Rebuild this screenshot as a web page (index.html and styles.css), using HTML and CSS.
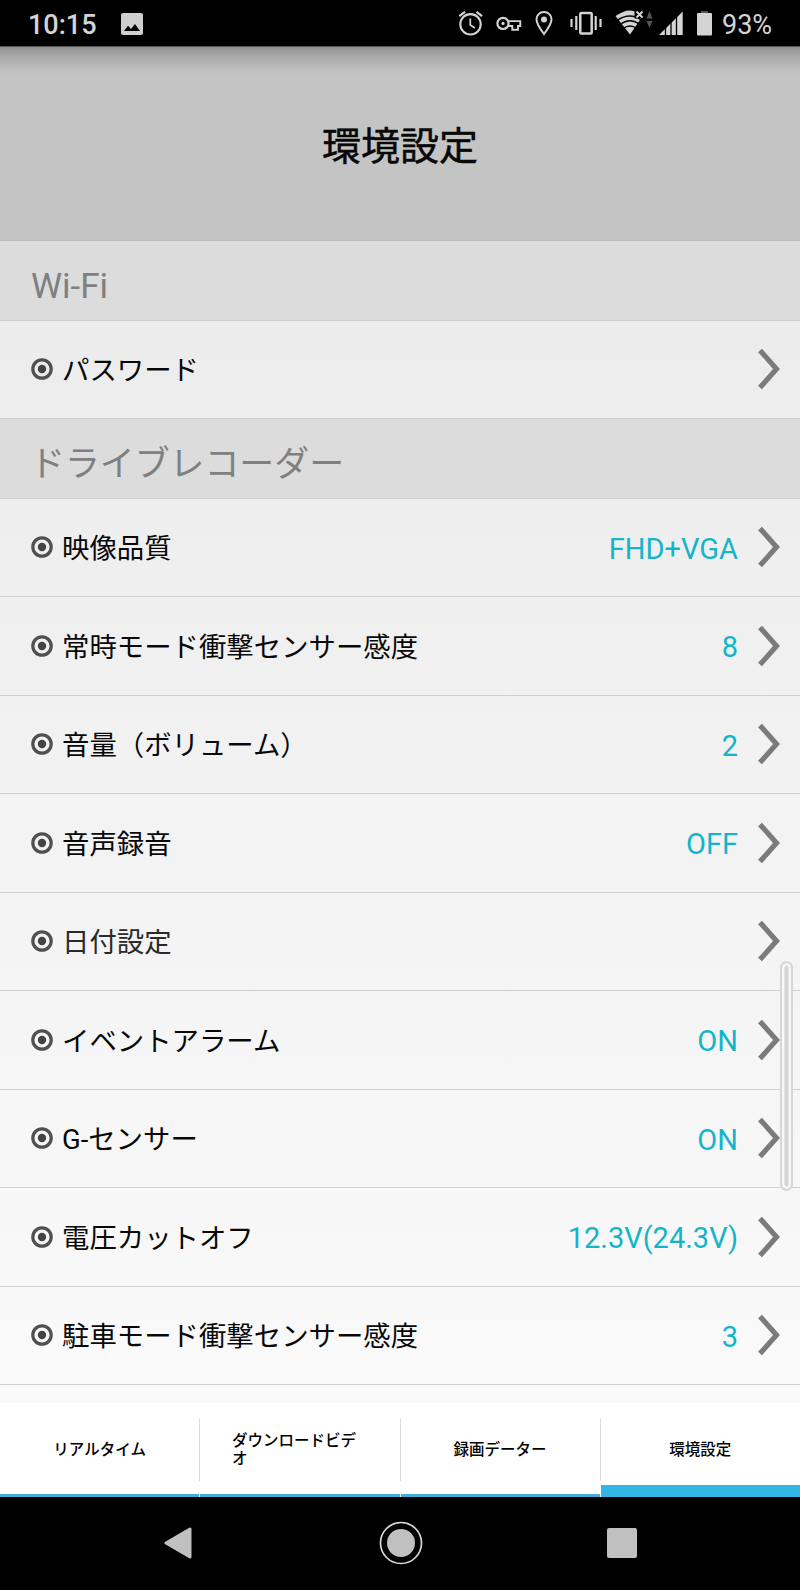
FILE: index.html
```
<!DOCTYPE html>
<html lang="ja">
<head>
<meta charset="utf-8">
<title>環境設定</title>
<link rel="stylesheet" href="styles.css">
</head>
<body>
<svg class="defs" width="0" height="0">
  <symbol id="dot" viewBox="0 0 22 22"><circle cx="11" cy="11" r="9.2" fill="none" stroke="#505050" stroke-width="3.2"/><circle cx="11" cy="11" r="4.2" fill="#444"/></symbol>
  <symbol id="chevron" viewBox="0 0 22 42"><path d="M2 2.4 18.5 21 2 39.6" fill="none" stroke="#7b7b7b" stroke-width="5.2"/></symbol>
</svg>
<div class="screen">
  <div class="statusbar">
    <span class="clock">10:15</span>
    <svg class="photo" width="22" height="22" viewBox="0 0 22 22"><rect width="22" height="22" rx="2" fill="#cfcfcf"/><path d="M3 18 7 12.8 10 16 14 11 19 18z" fill="#000"/></svg>
    <svg class="icons" width="240" height="46" viewBox="0 0 240 46" fill="none" stroke="#d4d4d4">
      <circle cx="20.5" cy="24.3" r="10.2" stroke-width="2.1"/><path d="M20.3 18.5V25l4.6 3" stroke-width="1.7"/><path d="M9.3 16.2 15 11.8M26.500 11.800 32 16.200" stroke-width="2.2"/>
      <circle cx="53" cy="23.400" r="5.600" stroke-width="2.200"/><circle cx="53" cy="23.400" r="1.600" fill="#d4d4d4" stroke="none"/><path d="M58 21.100H70.300V26H68V29.700H62.300V26H58" stroke-width="1.900"/>
      <path d="M94 12c-4.300 0-7.500 3.200-7.500 7.300 0 5 7.500 14.700 7.500 14.700s7.500-9.700 7.500-14.700C101.500 15.200 98.300 12 94 12z" stroke-width="2"/><circle cx="94" cy="19.600" r="3" fill="#d4d4d4" stroke="none"/>
      <rect x="130.300" y="13" width="11.400" height="20.500" rx="1" stroke-width="2.500"/><path d="M126.300 16V30M145.700 16V30M121.500 19V27M150.500 19V27" stroke-width="2.200"/>
      <g stroke="none" fill="#d4d4d4"><path d="M165.500 16Q177 8 184.500 11.500V18.500H191L180 34.500z"/><path d="M214.500 35H209L232.700 11.500V35z"/></g>
      <g stroke="#000" stroke-width="1.300"><path d="M167 20.500Q180 11.500 192 20.500M170 24.500Q180 17 190 24.500M173 28.500Q180 23.500 187 28.500"/><path d="M215.500 12V35M221 12V35M226.500 12V35"/></g>
      <path d="M186.500 11.500 192.500 17.500M192.500 11.500 186.500 17.500" stroke-width="2"/>
      <path d="M196.500 18.500 199.500 11 202.500 18.500zM196.500 21 199.500 28 202.500 21z" fill="#555" stroke="none"/>
    </svg>
    <svg class="battery" width="15" height="26" viewBox="0 0 15 26"><path d="M4 1h7v2H4z" fill="#555"/><rect y="3" width="15" height="22.500" rx="1" fill="#d4d4d4"/></svg>
    <span class="percent">93%</span>
  </div>
  <header class="header"><h1 class="title">環境設定</h1></header>
  <main class="settings">
    <h2 class="section section-wifi">Wi-Fi</h2>
    <div class="row"><svg class="dot"><use href="#dot"/></svg><span class="label">パスワード</span><svg class="chevron"><use href="#chevron"/></svg></div>
    <h2 class="section section-recorder">ドライブレコーダー</h2>
    <div class="row"><svg class="dot"><use href="#dot"/></svg><span class="label">映像品質</span><span class="value">FHD+VGA</span><svg class="chevron"><use href="#chevron"/></svg></div>
    <div class="row"><svg class="dot"><use href="#dot"/></svg><span class="label">常時モード衝撃センサー感度</span><span class="value">8</span><svg class="chevron"><use href="#chevron"/></svg></div>
    <div class="row"><svg class="dot"><use href="#dot"/></svg><span class="label">音量（ボリューム）</span><span class="value">2</span><svg class="chevron"><use href="#chevron"/></svg></div>
    <div class="row"><svg class="dot"><use href="#dot"/></svg><span class="label">音声録音</span><span class="value">OFF</span><svg class="chevron"><use href="#chevron"/></svg></div>
    <div class="row"><svg class="dot"><use href="#dot"/></svg><span class="label label-muted">日付設定</span><svg class="chevron"><use href="#chevron"/></svg></div>
    <div class="row"><svg class="dot"><use href="#dot"/></svg><span class="label">イベントアラーム</span><span class="value">ON</span><svg class="chevron"><use href="#chevron"/></svg></div>
    <div class="row"><svg class="dot"><use href="#dot"/></svg><span class="label">G-センサー</span><span class="value">ON</span><svg class="chevron"><use href="#chevron"/></svg></div>
    <div class="row"><svg class="dot"><use href="#dot"/></svg><span class="label">電圧カットオフ</span><span class="value">12.3V(24.3V)</span><svg class="chevron"><use href="#chevron"/></svg></div>
    <div class="row"><svg class="dot"><use href="#dot"/></svg><span class="label">駐車モード衝撃センサー感度</span><span class="value">3</span><svg class="chevron"><use href="#chevron"/></svg></div>
    <div class="scrollbar"></div>
  </main>
  <nav class="tabs">
    <div class="tab"><span class="tab-text">リアルタイム</span></div>
    <div class="tab"><span class="tab-text">ダウンロードビデオ</span></div>
    <div class="tab"><span class="tab-text">録画データー</span></div>
    <div class="tab tab-active"><span class="tab-text">環境設定</span></div>
  </nav>
  <div class="navbar">
    <svg width="28" height="32" viewBox="0 0 28 32"><path d="M2 16 26 2V30z" fill="#c0c0c0" stroke="#c0c0c0" stroke-width="3" stroke-linejoin="round"/></svg>
    <svg class="home" width="44" height="44" viewBox="0 0 44 44"><circle cx="22" cy="22" r="20.500" fill="none" stroke="#d8d8d8" stroke-width="1.700"/><circle cx="22" cy="22" r="14" fill="#c0c0c0"/></svg>
    <svg width="30" height="30" viewBox="0 0 30 30"><rect width="30" height="30" rx="2" fill="#c0c0c0"/></svg>
  </div>
</div>
</body>
</html>
```
FILE: styles.css
```
* { box-sizing: border-box; }
body { margin: 0; font-family: Roboto, "Noto Sans CJK JP", sans-serif; }
.defs { position: absolute; }
.screen { width: 800px; height: 1590px; display: flex; flex-direction: column; overflow: hidden; background: #000; }
.statusbar { height: 46px; flex: none; display: flex; align-items: center; background: #000; color: #d4d4d4; padding-left: 28px; }
.clock { width: 93px; font-size: 27px; line-height: 46px; padding-top: 3px; font-weight: 500; }
.photo { margin-top: 2px; }
.icons { margin-left: 307px; }
.battery { margin-left: 7px; }
.percent { margin-left: 10px; font-size: 27px; padding-top: 4px; }
.header { height: 195px; flex: none; display: flex; justify-content: center; background: linear-gradient(#333 0, #929292 1.5px, #aaa 10px, #c4c4c4 28px); border-bottom: 1px solid #bdbdbd; }
.title { margin: 0; padding-top: 73px; font-size: 39px; line-height: 56px; font-weight: 400; -webkit-text-stroke: 0.5px #080808; color: #080808; }
.settings { position: relative; height: 1162px; flex: none; background: linear-gradient(#ebebeb, #fafafa); }
.section { margin: 0; padding-left: 31px; height: 79.500px; border-bottom: 1px solid #d0d0d0; background: #dcdcdc; color: #808080; font-size: 35px; font-weight: 400; white-space: nowrap; }
.section-wifi { line-height: 92px; }
.section-recorder { padding-left: 30px; font-size: 34.900px; line-height: 91px; }
.row { height: 98.500px; display: flex; align-items: center; padding: 0 20px 0 31px; border-bottom: 1px solid #cfcfcf; }
.dot { width: 22px; height: 22px; flex: none; }
.label { margin-left: 9px; padding-top: 4px; font-size: 27.400px; line-height: 40px; color: #080808; white-space: nowrap; }
.label-muted { color: #2a2a2a; }
.value { margin-left: auto; font-size: 29px; color: #14b4ca; padding-top: 3px; }
.chevron { width: 22px; height: 42px; flex: none; margin-left: 20px; }
.label + .chevron { margin-left: auto; }
.scrollbar { position: absolute; left: 780px; top: 720px; width: 13px; height: 230px; border: 2px solid #d6d6d6; border-radius: 7px; background: #d4d4d4; box-shadow: inset 0 0 0 2.500px #f8f8f8; }
.tabs { height: 94px; flex: none; display: grid; grid-template-columns: repeat(4, 1fr); column-gap: 1px; background: #fff; }
.tab { position: relative; display: flex; align-items: center; justify-content: center; padding-top: 3px; border-bottom: 3px solid #42addb; }
.tab + .tab::before { content: ""; position: absolute; left: -1px; top: 15px; width: 1px; height: 63px; background: #dcdcdc; }
.tab-text { max-width: 136px; font-size: 15.500px; line-height: 18px; font-weight: 500; color: #000; word-break: break-all; }
.tab-active { padding-top: 12px; border-bottom: 12px solid #33b5e5; }
.navbar { height: 93px; flex: none; display: flex; align-items: center; padding: 0 163px 2px 164px; justify-content: space-between; }
.home { margin-left: 3px; }
```
